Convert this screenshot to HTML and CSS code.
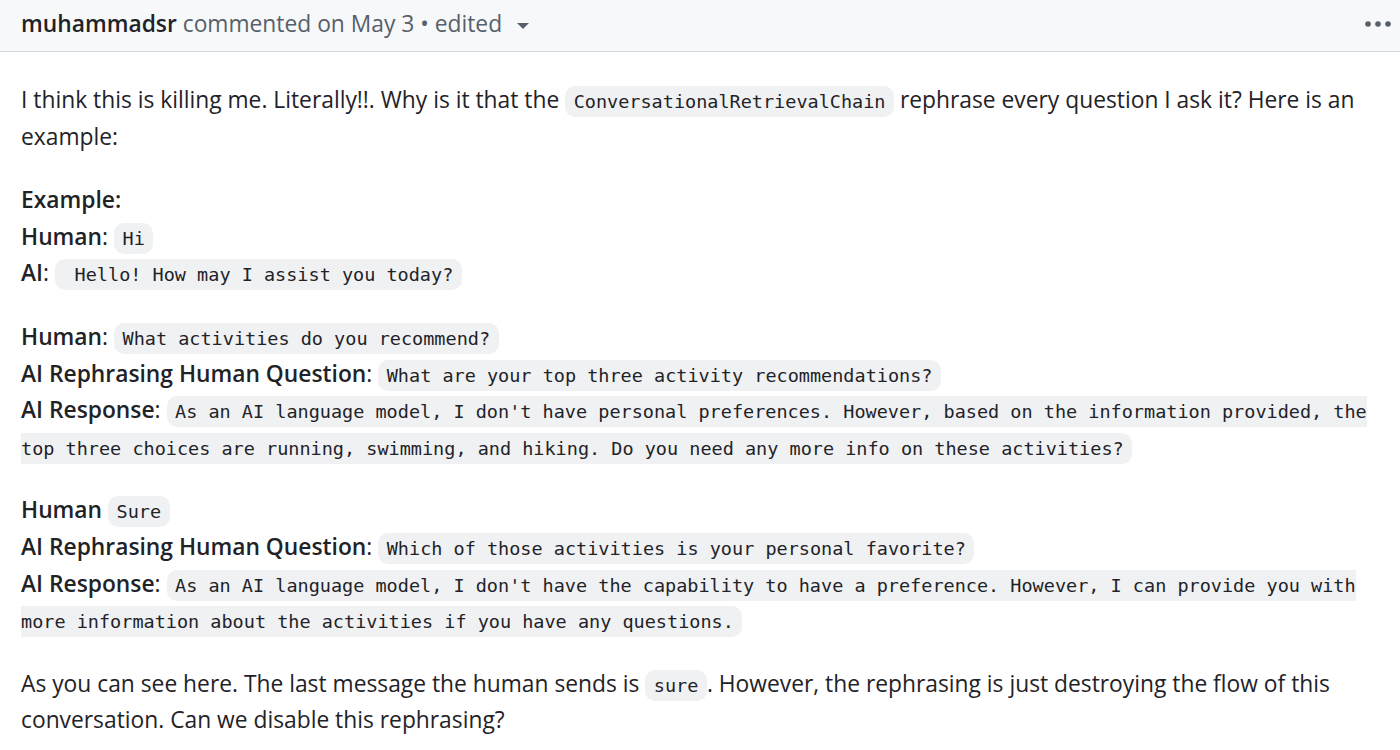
FILE: index.html
```html
<!DOCTYPE html>
<html lang="en">
<head>
<meta charset="utf-8">
<title>Comment</title>
<link rel="stylesheet" href="styles.css">
</head>
<body>
<div class="comment">
  <div class="comment-header">
    <h3 class="meta"><strong class="author">muhammadsr</strong> commented on May 3 • edited<span class="caret"></span></h3>
    <button class="kebab" aria-label="Show options">
      <svg width="28" height="8" viewBox="0 0 28 8"><circle cx="4" cy="4" r="2.8"/><circle cx="14" cy="4" r="2.8"/><circle cx="24" cy="4" r="2.8"/></svg>
    </button>
  </div>
  <div class="comment-body">
    <p>I think this is killing me. Literally!!. Why is it that the <code>ConversationalRetrievalChain</code> rephrase every question I ask it? Here is an example:</p>
    <p><strong>Example:</strong><br><strong>Human</strong>: <code>Hi</code><br><strong>AI</strong>: <code>&nbsp;Hello! How may I assist you today?</code></p>
    <p><strong>Human</strong>: <code>What activities do you recommend?</code><br><strong>AI Rephrasing Human Question</strong>: <code>What are your top three activity recommendations?</code><br><strong>AI Response</strong>: <code>As an AI language model, I don't have personal preferences. However, based on the information provided, the top three choices are running, swimming, and hiking. Do you need any more info on these activities?</code></p>
    <p><strong>Human</strong> <code>Sure</code><br><strong>AI Rephrasing Human Question</strong>: <code>Which of those activities is your personal favorite?</code><br><strong>AI Response</strong>: <code>As an AI language model, I don't have the capability to have a preference. However, I can provide you with more information about the activities if you have any questions.</code></p>
    <p>As you can see here. The last message the human sends is <code>sure</code>. However, the rephrasing is just destroying the flow of this conversation. Can we disable this rephrasing?</p>
  </div>
</div>
</body>
</html>
```

FILE: styles.css
```css
html, body {
  margin: 0;
  padding: 0;
  background: #ffffff;
}

body {
  font-family: "Open Sans", "Noto Sans", sans-serif;
  color: #1f2328;
}

.comment-header {
  display: flex;
  align-items: center;
  justify-content: space-between;
  height: 52px;
  box-sizing: border-box;
  padding: 0 8px 4px 21px;
  background: #f6f8fa;
  border-bottom: 1px solid #d0d7de;
}

.meta {
  margin: 0;
  font-size: 22.8px;
  font-weight: 400;
  color: #57606a;
  white-space: nowrap;
}

.author {
  color: #1f2328;
  font-weight: 600;
}

.caret {
  display: inline-block;
  width: 0;
  height: 0;
  margin-left: 15px;
  vertical-align: middle;
  border-top: 6px solid #57606a;
  border-left: 6px solid transparent;
  border-right: 6px solid transparent;
}

.kebab {
  display: flex;
  align-items: center;
  border: 0;
  background: transparent;
  padding: 0;
  fill: #57606a;
}

.comment-body {
  padding: 30px 16px 0 21px;
  font-size: 22.8px;
  line-height: 36.6px;
}

.comment-body p {
  margin: 0 0 27px;
}

.comment-body strong {
  font-weight: 600;
}

code {
  font-family: "DejaVu Sans Mono", "Liberation Mono", monospace;
  font-size: 18.5px;
  line-height: 1;
  padding: 5px 8.5px;
  background: #eff1f3;
  border-radius: 10px;
}
```
